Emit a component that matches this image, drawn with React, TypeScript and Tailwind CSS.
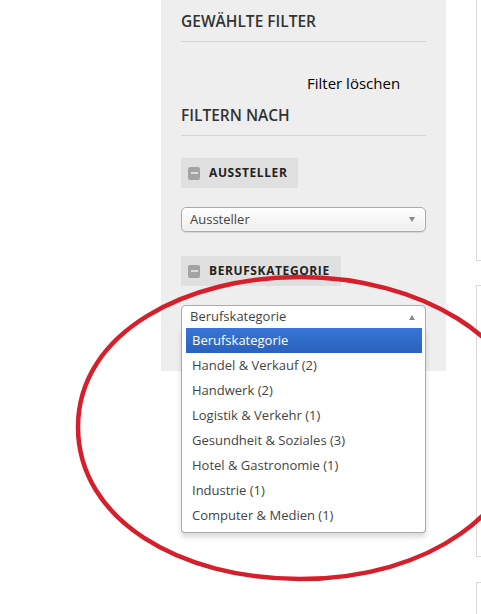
import React from "react";

const items = [
  "Handel & Verkauf (2)",
  "Handwerk (2)",
  "Logistik & Verkehr (1)",
  "Gesundheit & Soziales (3)",
  "Hotel & Gastronomie (1)",
  "Industrie (1)",
  "Computer & Medien (1)",
];

function MinusIcon() {
  return (
    <span className="w-[12px] h-[13px] rounded-[2px] bg-[#a3a3a3] flex items-center justify-center shrink-0">
      <span className="w-[7px] h-[2px] bg-[#dcdcdc]" />
    </span>
  );
}

function ToggleButton({ label }: { label: string }) {
  return (
    <div className="inline-flex items-center h-[30px] pl-[7px] pr-[11px] gap-[9px] bg-[#e0e0e0]">
      <MinusIcon />
      <span className="text-[12px] font-bold tracking-[0.6px] text-[#222] leading-none">{label}</span>
    </div>
  );
}

export default function App() {
  return (
    <div
      className="relative w-[481px] h-[614px] overflow-hidden bg-white flex"
      style={{ fontFamily: '"Open Sans", "Liberation Sans", sans-serif' }}
    >
      <div className="w-[161px] shrink-0" />
      <div className="w-[285px] shrink-0 self-start bg-[#eeeeee] px-5 pb-[43px]">
        <div className="pt-[11px] pb-[10px] border-b border-[#d5d5d5] text-[15.5px] leading-[20px] font-semibold text-[#333]">
          GEWÄHLTE FILTER
        </div>
        <div className="mt-[31px] pl-[126px] text-[15px] leading-[20px] font-medium text-black">
          Filter löschen
        </div>
        <div className="mt-[12px] pb-[10px] border-b border-[#d5d5d5] text-[15.5px] leading-[20px] font-semibold text-[#333]">
          FILTERN NACH
        </div>
        <div className="mt-[20px]">
          <ToggleButton label="AUSSTELLER" />
        </div>
        <div className="mt-[19px] h-[25px] rounded-[5px] border border-[#aaaaaa] bg-gradient-to-b from-white to-[#eeeeee] flex items-center pl-[8px] pr-[10px] shadow-[inset_0_0_3px_white,0_1px_1px_rgba(0,0,0,0.1)]">
          <span className="flex-1 text-[13px] text-[#444]">Aussteller</span>
          <span className="w-0 h-0 border-l-[3.5px] border-r-[3.5px] border-t-[5px] border-l-transparent border-r-transparent border-t-[#888]" />
        </div>
        <div className="mt-[22px]">
          <ToggleButton label="BERUFSKATEGORIE" />
        </div>
        <div className="relative mt-[19px]">
          <div className="h-[23px] rounded-t-[5px] border border-b-0 border-[#aaaaaa] bg-white flex items-center pl-[8px] pr-[10px]">
            <span className="flex-1 text-[13px] text-[#444]">Berufskategorie</span>
            <span className="w-0 h-0 border-l-[3.5px] border-r-[3.5px] border-b-[5px] border-l-transparent border-r-transparent border-b-[#888]" />
          </div>
          <div className="absolute left-0 right-0 top-full z-10 bg-white border border-t-0 border-[#aaaaaa] rounded-b-[4px] shadow-[0_4px_5px_rgba(0,0,0,0.15)] pl-[4px] pr-[3px] pb-[4px]">
            <div className="h-[25px] px-[6px] flex items-center text-[13px] text-white bg-gradient-to-b from-[#3875d7] to-[#2a62bc]">
              Berufskategorie
            </div>
            {items.map((t) => (
              <div key={t} className="h-[25px] px-[6px] flex items-center text-[13px] text-[#444]">
                {t}
              </div>
            ))}
          </div>
        </div>
      </div>
      <div className="ml-[30px] flex flex-col w-[40px] shrink-0 self-start">
        <div className="shrink-0 h-[261px] border-l border-b border-[#d8d8d8]" />
        <div className="shrink-0 mt-[24px] h-[272px] border-l border-t border-b border-[#d8d8d8]" />
        <div className="shrink-0 mt-[25px] h-[60px] border-l border-t border-[#d8d8d8]" />
      </div>
      <svg className="absolute inset-0 pointer-events-none z-20" width="481" height="614" viewBox="0 0 481 614">
        <path
          d="M 78 427 C 78 330, 190 277, 300 277 C 420 277, 525 340, 525 420 C 525 510, 430 579, 300 579 C 180 579, 78 520, 78 427 Z"
          fill="none"
          stroke="#d5202b"
          strokeWidth="4.5"
        />
      </svg>
    </div>
  );
}
